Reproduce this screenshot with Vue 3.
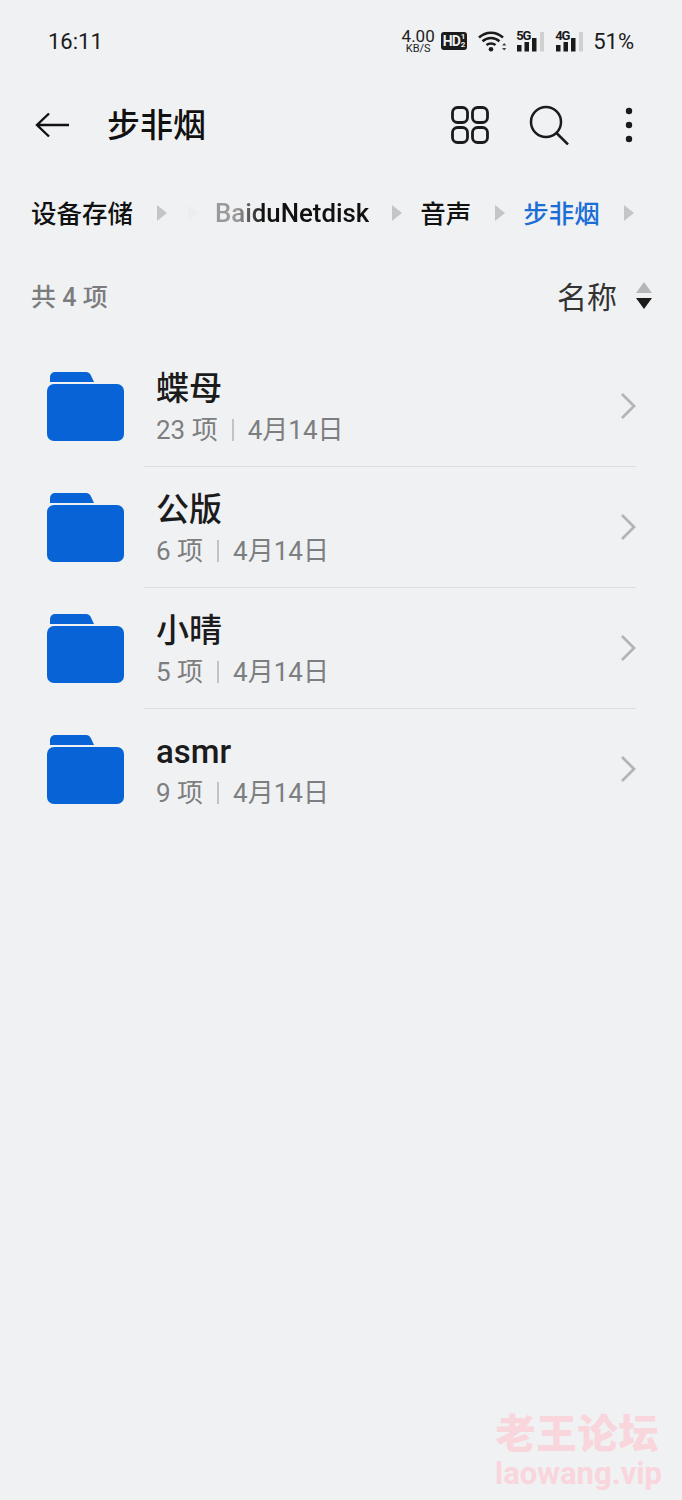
<template>
  <div class="page">
    <div class="status">
      <span class="time">16:11</span>
      <div class="status__right">
        <div class="speed"><span>4.00</span><span>KB/S</span></div>
        <div class="hd">HD<span class="hd__sub"><i>1</i><i>2</i></span></div>
        <svg class="wifi" width="30" height="22" viewBox="0 0 30 22">
          <path d="M1 7.500C8 1 18 1 25 7.500" fill="none" stroke="#1b1b1b" stroke-width="2.500" />
          <path d="M4.500 11.300C9.500 6.800 16.500 6.800 21.500 11.300" fill="none" stroke="#1b1b1b" stroke-width="2.500" />
          <path d="M8.500 15C11 13 15 13 17.500 15" fill="none" stroke="#1b1b1b" stroke-width="2.500" />
          <circle cx="13" cy="19.300" r="2.300" fill="#1b1b1b" />
          <path d="M24 15.500l2.200-2.500 2.200 2.500zM24 18l2.200 2.500 2.200-2.500z" fill="#444" />
        </svg>
        <div v-for="net in networks" :key="net" class="signal">
          <span class="signal__label">{{ net }}</span>
          <svg width="28" height="21" viewBox="0 0 28 21">
            <rect x="1" y="14" width="4.500" height="6.500" fill="#1b1b1b" />
            <rect x="8.500" y="11" width="4.500" height="9.500" fill="#1b1b1b" />
            <rect x="16" y="7" width="4.500" height="13.500" fill="#1b1b1b" />
            <rect x="24" y="1" width="4" height="19.500" fill="#cfd0d2" />
          </svg>
        </div>
        <span class="battery">51%</span>
      </div>
    </div>

    <div class="toolbar">
      <svg class="back" width="36" height="28" viewBox="0 0 36 28">
        <path d="M34 14H2M14 2.500L2 14l12 11.500" fill="none" stroke="#111" stroke-width="2.400" />
      </svg>
      <h1 class="title">步非烟</h1>
      <svg class="icon grid" width="38" height="38" viewBox="0 0 38 38">
        <rect x="1.500" y="1.500" width="15" height="15" rx="5" />
        <rect x="21.500" y="1.500" width="15" height="15" rx="5" />
        <rect x="1.500" y="21.500" width="15" height="15" rx="5" />
        <rect x="21.500" y="21.500" width="15" height="15" rx="5" />
      </svg>
      <svg class="icon search" width="40" height="40" viewBox="0 0 40 40">
        <circle cx="17" cy="17" r="15" />
        <path d="M27.500 28L39 39.500" />
      </svg>
      <svg class="more" width="8" height="36" viewBox="0 0 8 36">
        <circle cx="4" cy="4" r="3.200" />
        <circle cx="4" cy="18" r="3.200" />
        <circle cx="4" cy="32" r="3.200" />
      </svg>
    </div>

    <div class="crumbs">
      <span class="crumb">设备存储</span>
      <span class="arrow arrow--first"></span>
      <span class="arrow arrow--ghost"></span>
      <span class="crumb crumb--latin">BaiduNetdisk</span>
      <span class="arrow"></span>
      <span class="crumb">音声</span>
      <span class="arrow"></span>
      <span class="crumb crumb--active">步非烟</span>
      <span class="arrow"></span>
    </div>

    <div class="summary">
      <span class="summary__count">共 4 项</span>
      <div class="sort">
        <span>名称</span>
        <div class="sort__icon"><i class="up"></i><i class="down"></i></div>
      </div>
    </div>

    <ul class="list">
      <li v-for="item in folders" :key="item.name" class="row">
        <svg class="folder" width="77" height="69" viewBox="0 0 77 69">
          <path d="M3 10V5a5 5 0 0 1 5-5h31c2.500 0 4 1.500 5 3.500L47 10z" fill="#0864d6" />
          <rect x="0" y="12" width="77" height="57" rx="7" fill="#0864d6" />
        </svg>
        <div class="row__body">
          <div class="row__text">
            <div class="row__name">{{ item.name }}</div>
            <div class="row__meta">
              <span>{{ item.count }} 项</span>
              <span class="sep"></span>
              <span>4月14日</span>
            </div>
          </div>
          <svg class="chevron" width="17" height="28" viewBox="0 0 17 28">
            <path d="M3 2l12 12L3 26" fill="none" stroke="#b3b4b6" stroke-width="2.800" />
          </svg>
        </div>
      </li>
    </ul>

    <div class="mark">
      <div class="mark__cn">老王论坛</div>
      <div class="mark__en">laowang.vip</div>
    </div>
  </div>
</template>

<script setup>
const networks = ['5G', '4G']

const folders = [
  { name: '蝶母', count: 23 },
  { name: '公版', count: 6 },
  { name: '小晴', count: 5 },
  { name: 'asmr', count: 9 },
]
</script>

<style>
html,
body {
  margin: 0;
  background: #f0f1f3;
}
</style>

<style scoped>
.page {
  position: relative;
  height: 1500px;
  overflow: hidden;
  background: #f0f1f3;
  color: #111;
  font-family: Roboto, "Noto Sans CJK SC", sans-serif;
}

.status {
  display: flex;
  align-items: center;
  justify-content: space-between;
  height: 82px;
  padding: 0 48px;
}

.time {
  font-size: 22px;
  color: #1b1b1b;
}

.status__right {
  display: flex;
  align-items: center;
}

.speed {
  display: flex;
  flex-direction: column;
  align-items: center;
  width: 34px;
  color: #222;
  line-height: 1;
}

.speed span:first-child {
  font-size: 17px;
  height: 14px;
}

.speed span:last-child {
  font-size: 11px;
  margin-top: 1px;
}

.hd {
  display: flex;
  align-items: center;
  justify-content: center;
  width: 26px;
  height: 18px;
  margin-left: 6px;
  border-radius: 3px;
  background: #1b1b1b;
  color: #f0f1f3;
  font-size: 14px;
  font-weight: 700;
  line-height: 1;
  letter-spacing: -1px;
}

.hd__sub {
  display: flex;
  flex-direction: column;
  margin-left: 1px;
  font-size: 8px;
  letter-spacing: 0;
}

.hd__sub i {
  font-style: normal;
  line-height: 8px;
}

.wifi {
  margin-left: 11px;
}

.signal {
  position: relative;
  width: 28px;
  height: 21px;
  margin-left: 8px;
}

.signal + .signal {
  margin-left: 11px;
}

.signal svg {
  display: block;
}

.signal__label {
  position: absolute;
  top: -2px;
  left: 0;
  font-size: 13px;
  font-weight: 700;
  line-height: 13px;
  letter-spacing: -1px;
  color: #1b1b1b;
}

.battery {
  margin-left: 10px;
  font-size: 22px;
  color: #1b1b1b;
}

.toolbar {
  display: flex;
  align-items: center;
  height: 86px;
  padding: 0 49px 0 35px;
}

.back {
  flex: none;
}

.title {
  flex: 1;
  margin: 2px 0 0 36px;
  font-size: 33px;
  font-weight: 500;
  line-height: 44px;
}

.icon {
  flex: none;
  fill: none;
  stroke: #1b1b1b;
}

.grid {
  stroke-width: 2.800;
}

.search {
  margin-left: 40px;
  stroke-width: 2.500;
}

.more {
  flex: none;
  margin-left: 56px;
  fill: #1b1b1b;
}

.crumbs {
  display: flex;
  align-items: center;
  height: 90px;
  padding-left: 31px;
}

.crumb {
  padding-bottom: 4px;
  font-size: 25.500px;
  font-weight: 500;
  white-space: nowrap;
  color: #111;
}

.crumb--latin {
  margin-right: -1px;
  padding-bottom: 0;
  font-size: 25.800px;
  background: linear-gradient(90deg, #999 0, #999 22px, #111 48px);
  -webkit-background-clip: text;
  background-clip: text;
  color: transparent;
}

.crumb--active {
  color: #1a6ed6;
}

.arrow {
  flex: none;
  width: 0;
  height: 0;
  margin: 0 18px 0 24px;
  border-left: 10px solid #c4c5c7;
  border-top: 8.500px solid transparent;
  border-bottom: 8.500px solid transparent;
}

.arrow--first {
  margin: 0 21px 0 24px;
}

.arrow--ghost {
  margin: 0 17px 0 0;
  border-left-color: #ecedef;
}

.summary {
  display: flex;
  align-items: center;
  justify-content: space-between;
  height: 78px;
  padding: 0 30px 4px 31px;
  box-sizing: border-box;
}

.summary__count {
  font-size: 25px;
  font-weight: 500;
  color: #7b7c7e;
}

.sort {
  display: flex;
  align-items: center;
  gap: 19px;
  font-size: 30px;
  color: #333;
}

.sort__icon {
  display: flex;
  flex-direction: column;
  gap: 5px;
}

.sort__icon i {
  width: 0;
  height: 0;
  border-left: 8px solid transparent;
  border-right: 8px solid transparent;
}

.up {
  border-bottom: 11px solid #b5b6b8;
}

.down {
  border-top: 11px solid #1b1b1b;
}

.list {
  margin: 10px 0 0;
  padding: 0;
  list-style: none;
}

.row {
  display: flex;
  align-items: stretch;
  height: 121px;
  padding: 0 46px 0 47px;
}

.folder {
  flex: none;
  align-self: center;
}

.row__body {
  flex: 1;
  display: flex;
  align-items: center;
  justify-content: space-between;
  margin-left: 20px;
  padding-left: 12px;
  border-bottom: 1px solid #dcdde0;
}

.row:last-child .row__body {
  border-bottom-color: transparent;
}

.row__text {
  padding-top: 3px;
}

.row__name {
  font-size: 33px;
  font-weight: 500;
  line-height: 42px;
  color: #1b1b1b;
}

.row__meta {
  display: flex;
  align-items: center;
  margin-top: 2px;
  font-size: 26px;
  line-height: 36px;
  color: #7d7e80;
}

.sep {
  width: 2px;
  height: 22px;
  margin: 0 14px;
  background: #c2c3c5;
}

.mark {
  position: absolute;
  right: 20px;
  bottom: 8px;
  color: #f9d5dc;
  text-align: center;
  font-weight: 900;
}

.mark__cn {
  margin-right: 2px;
  font-size: 40px;
  line-height: 50px;
  letter-spacing: 1px;
  transform: translateY(4px);
}

.mark__en {
  font-size: 31px;
  line-height: 36px;
  font-weight: 700;
}
</style>
